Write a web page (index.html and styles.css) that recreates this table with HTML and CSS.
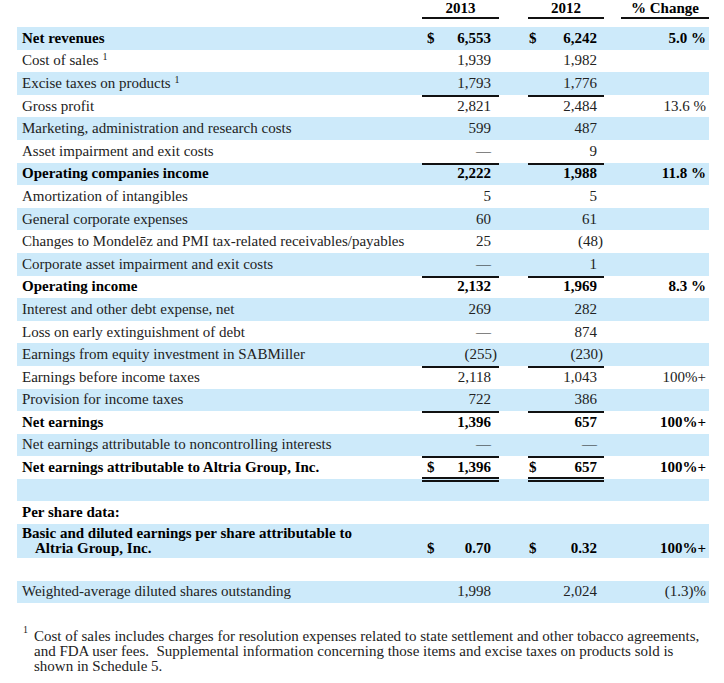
FILE: index.html
```html
<!DOCTYPE html>
<html>
<head>
<meta charset="utf-8">
<link rel="stylesheet" href="styles.css">
</head>
<body>
<div class="page">
  <div class="row head">
    <div class="hc c1">2013</div>
    <div class="hc c2">2012</div>
    <div class="hc c3">% Change</div>
  </div>

  <div class="row blue b">
    <div class="lbl">Net revenues</div>
    <div class="n n1"><span>$</span><span>6,553</span></div>
    <div class="n n2"><span>$</span><span>6,242</span></div>
    <div class="p">5.0 %</div>
  </div>
  <div class="row">
    <div class="lbl">Cost of sales <sup>1</sup></div>
    <div class="n n1"><span></span><span>1,939</span></div>
    <div class="n n2"><span></span><span>1,982</span></div>
  </div>
  <div class="row blue">
    <div class="lbl">Excise taxes on products <sup>1</sup></div>
    <div class="n n1"><span></span><span>1,793</span></div>
    <div class="n n2"><span></span><span>1,776</span></div>
  </div>
  <div class="row">
    <div class="lbl">Gross profit</div>
    <div class="n n1 rt"><span></span><span>2,821</span></div>
    <div class="n n2 rt"><span></span><span>2,484</span></div>
    <div class="p">13.6 %</div>
  </div>
  <div class="row blue">
    <div class="lbl">Marketing, administration and research costs</div>
    <div class="n n1"><span></span><span>599</span></div>
    <div class="n n2"><span></span><span>487</span></div>
  </div>
  <div class="row">
    <div class="lbl">Asset impairment and exit costs</div>
    <div class="n n1"><span></span><span>—</span></div>
    <div class="n n2"><span></span><span>9</span></div>
  </div>
  <div class="row blue b">
    <div class="lbl">Operating companies income</div>
    <div class="n n1 rt"><span></span><span>2,222</span></div>
    <div class="n n2 rt"><span></span><span>1,988</span></div>
    <div class="p">11.8 %</div>
  </div>
  <div class="row">
    <div class="lbl">Amortization of intangibles</div>
    <div class="n n1"><span></span><span>5</span></div>
    <div class="n n2"><span></span><span>5</span></div>
  </div>
  <div class="row blue">
    <div class="lbl">General corporate expenses</div>
    <div class="n n1"><span></span><span>60</span></div>
    <div class="n n2"><span></span><span>61</span></div>
  </div>
  <div class="row">
    <div class="lbl">Changes to Mondelēz and PMI tax-related receivables/payables</div>
    <div class="n n1"><span></span><span>25</span></div>
    <div class="n n2"><span></span><span class="neg">(48)</span></div>
  </div>
  <div class="row blue">
    <div class="lbl">Corporate asset impairment and exit costs</div>
    <div class="n n1"><span></span><span>—</span></div>
    <div class="n n2"><span></span><span>1</span></div>
  </div>
  <div class="row b">
    <div class="lbl">Operating income</div>
    <div class="n n1 rt"><span></span><span>2,132</span></div>
    <div class="n n2 rt"><span></span><span>1,969</span></div>
    <div class="p">8.3 %</div>
  </div>
  <div class="row blue">
    <div class="lbl">Interest and other debt expense, net</div>
    <div class="n n1"><span></span><span>269</span></div>
    <div class="n n2"><span></span><span>282</span></div>
  </div>
  <div class="row">
    <div class="lbl">Loss on early extinguishment of debt</div>
    <div class="n n1"><span></span><span>—</span></div>
    <div class="n n2"><span></span><span>874</span></div>
  </div>
  <div class="row blue">
    <div class="lbl">Earnings from equity investment in SABMiller</div>
    <div class="n n1"><span></span><span class="neg">(255)</span></div>
    <div class="n n2"><span></span><span class="neg">(230)</span></div>
  </div>
  <div class="row">
    <div class="lbl">Earnings before income taxes</div>
    <div class="n n1 rt"><span></span><span>2,118</span></div>
    <div class="n n2 rt"><span></span><span>1,043</span></div>
    <div class="p">100%+</div>
  </div>
  <div class="row blue">
    <div class="lbl">Provision for income taxes</div>
    <div class="n n1"><span></span><span>722</span></div>
    <div class="n n2"><span></span><span>386</span></div>
  </div>
  <div class="row b">
    <div class="lbl">Net earnings</div>
    <div class="n n1 rt"><span></span><span>1,396</span></div>
    <div class="n n2 rt"><span></span><span>657</span></div>
    <div class="p">100%+</div>
  </div>
  <div class="row blue">
    <div class="lbl">Net earnings attributable to noncontrolling interests</div>
    <div class="n n1"><span></span><span>—</span></div>
    <div class="n n2"><span></span><span>—</span></div>
  </div>
  <div class="row b">
    <div class="lbl">Net earnings attributable to Altria Group, Inc.</div>
    <div class="n n1 rtb"><span>$</span><span>1,396</span></div>
    <div class="n n2 rtb"><span>$</span><span>657</span></div>
    <div class="p">100%+</div>
  </div>
  <div class="row blue">
    <div class="lbl"></div>
    <div class="n n1 dbl2"></div>
    <div class="n n2 dbl2"></div>
  </div>
  <div class="row b">
    <div class="lbl">Per share data:</div>
  </div>
  <div class="row blue b tall">
    <div class="lbl wrap">Basic and diluted earnings per share attributable to<br>Altria Group, Inc.</div>
    <div class="n n1"><span>$</span><span>0.70</span></div>
    <div class="n n2"><span>$</span><span>0.32</span></div>
    <div class="p">100%+</div>
  </div>
  <div class="row"></div>
  <div class="row blue">
    <div class="lbl">Weighted-average diluted shares outstanding</div>
    <div class="n n1"><span></span><span>1,998</span></div>
    <div class="n n2"><span></span><span>2,024</span></div>
    <div class="p">(1.3)%</div>
  </div>

  <div class="foot">
    <span class="fn-num">1</span>
    <p class="fn-text">Cost of sales includes charges for resolution expenses related to state settlement and other tobacco agreements,<br>and FDA user fees.&nbsp; Supplemental information concerning those items and excise taxes on products sold is<br>shown in Schedule 5.</p>
  </div>
</div>
</body>
</html>
```

FILE: styles.css
```css
html, body {
  margin: 0;
  padding: 0;
  background: #fff;
}

.page {
  width: 692px;
  padding-left: 17px;
  font-family: "Liberation Serif", "Times New Roman", serif;
  font-size: 15px;
  color: #222;
}

.row {
  display: grid;
  grid-template-columns: 405px 77px 29px 76px 17px 88px;
  height: 22.6px;
  line-height: 15px;
}

.row.blue {
  background: #cdeafa;
}

.row.b {
  font-weight: bold;
  color: #000;
}

.row.head {
  height: 19px;
  line-height: 17px;
  margin-bottom: 8px;
  font-weight: bold;
  color: #000;
}

.hc {
  text-align: center;
  background: linear-gradient(#111, #111) left bottom / 100% 2px no-repeat;
}

.hc.c1 { grid-column: 2; }
.hc.c2 { grid-column: 4; }
.hc.c3 { grid-column: 6; }

.lbl {
  grid-column: 1;
  align-self: center;
  padding-left: 5px;
  white-space: nowrap;
}

.lbl sup {
  font-size: 10px;
  line-height: 0;
  vertical-align: 5px;
}

.n {
  display: flex;
  justify-content: space-between;
  align-items: center;
}

.n1 {
  grid-column: 2;
  padding: 0 8px 0 5px;
}

.n2 {
  grid-column: 4;
  padding: 0 7px 0 1px;
}

.neg {
  margin-right: -6px;
}

.p {
  grid-column: 6;
  display: flex;
  align-items: center;
  justify-content: flex-end;
  padding-right: 3px;
}

.rt {
  background: linear-gradient(#111, #111) left top / 100% 2px no-repeat;
}

.rtb {
  background:
    linear-gradient(#111, #111) left top / 100% 2px no-repeat,
    linear-gradient(#111, #111) left bottom / 100% 2px no-repeat;
}

.dbl2 {
  background: linear-gradient(#111, #111) left 0 top 1px / 100% 2px no-repeat;
}

.row.tall {
  height: 34px;
}

.row.tall .lbl {
  align-self: start;
  padding: 1.5px 0 0 18px;
  text-indent: -13px;
}

.row.tall .n,
.row.tall .p {
  align-items: flex-end;
  padding-bottom: 2px;
}

.foot {
  display: flex;
  align-items: flex-start;
  margin-top: 26px;
  padding-left: 6px;
}

.fn-num {
  width: 11px;
  flex: none;
  font-size: 10px;
  line-height: 10px;
  margin-top: -4px;
}

.fn-text {
  margin: 0;
  line-height: 15px;
  white-space: nowrap;
}
```
